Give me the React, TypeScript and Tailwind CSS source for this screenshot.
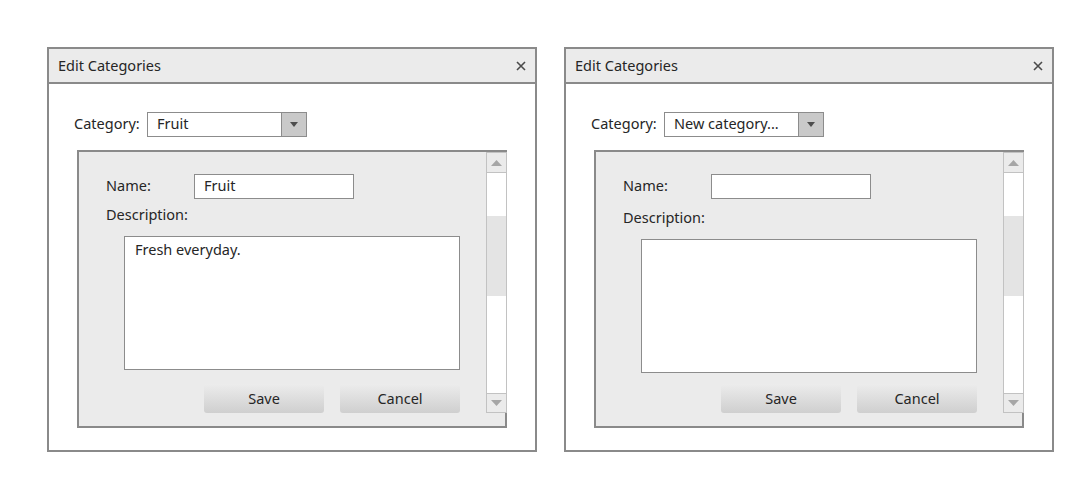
import React from "react";

function Triangle({ up }: { up?: boolean }) {
  return (
    <svg width="11" height="6" viewBox="0 0 11 6" className="block">
      {up ? (
        <polygon points="0,6 11,6 5.5,0" fill="#a6a6a6" />
      ) : (
        <polygon points="0,0 11,0 5.5,6" fill="#a6a6a6" />
      )}
    </svg>
  );
}

function Scrollbar() {
  return (
    <div className="w-[21px] flex flex-col">
      <div className="h-[261px] border border-[#c2c2c2] bg-white flex flex-col">
        <div className="h-[20px] shrink-0 bg-[#ebebeb] border-b border-[#c2c2c2] flex items-center justify-center">
          <Triangle up />
        </div>
        <div className="flex-1 flex flex-col">
          <div className="h-[43px]" />
          <div className="h-[80px] bg-[#e4e4e4]" />
          <div className="flex-1" />
        </div>
        <div className="h-[19px] shrink-0 bg-[#ebebeb] border-t border-[#c2c2c2] flex items-center justify-center">
          <Triangle />
        </div>
      </div>
      <div className="flex-1 border-r-2 border-[#8a8a8a]" />
    </div>
  );
}

function Combo({ value }: { value: string }) {
  return (
    <div className="w-[160px] h-[25px] border border-[#8c8c8c] bg-white flex">
      <div className="w-[133px] pl-[9px] flex items-center text-[14.5px] text-[#262626] pb-[1px]">{value}</div>
      <div className="flex-1 bg-[#c9c9c9] border-l border-[#8c8c8c] flex items-center justify-center">
        <svg width="8" height="5" viewBox="0 0 8 5" className="block">
          <polygon points="0,0 8,0 4,5" fill="#4d4d4d" />
        </svg>
      </div>
    </div>
  );
}

function Button({ label }: { label: string }) {
  return (
    <div className="w-[120px] h-[29px] rounded-[3px] bg-gradient-to-b from-[#ececec] to-[#cfcfcf] flex items-center justify-center text-[14.5px] text-[#262626]">
      {label}
    </div>
  );
}

function Dialog({
  category,
  name,
  desc,
  descMt,
  btnMt,
}: {
  category: string;
  name: string;
  desc: string;
  descMt: string;
  btnMt: string;
}) {
  return (
    <div className="w-[490px] h-[405px] border-2 border-[#8a8a8a] bg-white flex flex-col">
      <div className="h-[35px] shrink-0 bg-[#ebebeb] border-b-2 border-[#8a8a8a] flex items-center justify-between pl-[9px] pr-[9px]">
        <span className="text-[14.5px] text-[#262626]">Edit Categories</span>
        <svg width="10" height="10" viewBox="0 0 10 10" className="block">
          <path d="M1 1 L9 9 M9 1 L1 9" stroke="#4a4a4a" strokeWidth="1.6" />
        </svg>
      </div>
      <div className="flex items-center pl-[25px] mt-[28px] h-[25px]">
        <span className="w-[73px] text-[14.5px] text-[#262626] pb-[2px]">Category:</span>
        <Combo value={category} />
      </div>
      <div className="ml-[28px] mt-[13px] w-[430px] h-[278px] border-l-2 border-t-2 border-b-2 border-[#8a8a8a] bg-[#ebebeb] flex">
        <div className="flex-1 flex flex-col pl-[27px] pt-[22px]">
          <div className="flex items-center h-[25px]">
            <span className="w-[88px] text-[14.5px] text-[#262626] pb-[2px]">Name:</span>
            <div className="w-[160px] h-[25px] border border-[#8c8c8c] bg-white pl-[9px] pb-[1px] flex items-center text-[14.5px] text-[#262626]">
              {name}
            </div>
          </div>
          <div className={`${descMt} h-[22px] pt-[2px] flex items-center text-[14.5px] text-[#262626]`}>Description:</div>
          <div className="mt-[11px] ml-[18px] w-[336px] h-[134px] border border-[#8c8c8c] bg-white pl-[10px] pt-[2px] text-[14.5px] text-[#262626]">
            {desc}
          </div>
          <div className={`${btnMt} ml-[98px] flex gap-[16px]`}>
            <Button label="Save" />
            <Button label="Cancel" />
          </div>
        </div>
        <Scrollbar />
      </div>
    </div>
  );
}

export default function App() {
  return (
    <div
      className="w-[1085px] h-[483px] bg-white flex pl-[47px] pt-[47px] gap-[27px]"
      style={{ fontFamily: '"Noto Sans", "Open Sans", sans-serif' }}
    >
      <Dialog category="Fruit" name="Fruit" desc="Fresh everyday." descMt="mt-[4px]" btnMt="mt-[14px]" />
      <Dialog category="New category..." name="" desc="" descMt="mt-[7px]" btnMt="mt-[11px]" />
    </div>
  );
}
